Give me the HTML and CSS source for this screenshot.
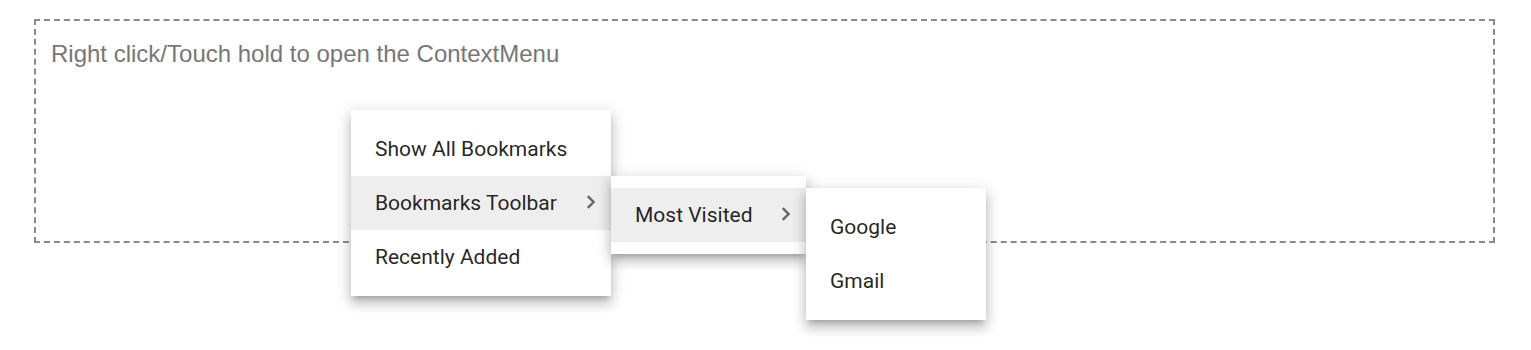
FILE: index.html
```html
<!DOCTYPE html>
<html>
<head>
<meta charset="utf-8">
<link rel="stylesheet" href="styles.css">
</head>
<body>
<div class="page">
  <div class="target">Right click/Touch hold to open the ContextMenu</div>

  <ul class="menu menu-main">
    <li class="item">Show All Bookmarks</li>
    <li class="item item-active">Bookmarks Toolbar
      <svg class="caret" width="10" height="14" viewBox="0 0 10 14"><polyline points="1.8,1.2 7.6,7 1.8,12.8" fill="none" stroke="#666666" stroke-width="2.4"/></svg>
    </li>
    <li class="item">Recently Added</li>
  </ul>

  <ul class="menu menu-sub1">
    <li class="item item-active">Most Visited
      <svg class="caret" width="10" height="14" viewBox="0 0 10 14"><polyline points="1.8,1.2 7.6,7 1.8,12.8" fill="none" stroke="#666666" stroke-width="2.4"/></svg>
    </li>
  </ul>

  <ul class="menu menu-sub2">
    <li class="item">Google</li>
    <li class="item">Gmail</li>
  </ul>
</div>
</body>
</html>
```

FILE: styles.css
```css
html, body {
  margin: 0;
  padding: 0;
  background: #ffffff;
}

.page {
  position: relative;
  width: 1531px;
  height: 350px;
  padding: 19px 0 0 34px;
  box-sizing: border-box;
}

.target {
  width: 1461px;
  height: 224px;
  box-sizing: border-box;
  border: 2px dashed #8a8a8a;
  padding: 19px 0 0 15px;
  font-family: "Liberation Sans", Arial, sans-serif;
  font-size: 24px;
  color: #777777;
}

.menu {
  position: absolute;
  margin: 0;
  padding: 12px 0;
  list-style: none;
  background: #ffffff;
  box-shadow: 0 5px 5px -3px rgba(0,0,0,0.2), 0 8px 10px 1px rgba(0,0,0,0.14), 0 3px 14px 2px rgba(0,0,0,0.12);
  font-family: Roboto, "Noto Sans", sans-serif;
  font-size: 21px;
  color: rgba(0,0,0,0.87);
}

.menu-main {
  left: 351px;
  top: 110px;
  width: 260px;
  z-index: 1;
}

.menu-sub1 {
  left: 611px;
  top: 176px;
  width: 195px;
  z-index: 2;
}

.menu-sub2 {
  left: 806px;
  top: 188px;
  width: 180px;
  z-index: 3;
}

.item {
  position: relative;
  height: 54px;
  line-height: 54px;
  padding: 0 24px;
  white-space: nowrap;
}

.item-active {
  background: #eeeeee;
}

.caret {
  position: absolute;
  right: 15px;
  top: 19px;
}
```
